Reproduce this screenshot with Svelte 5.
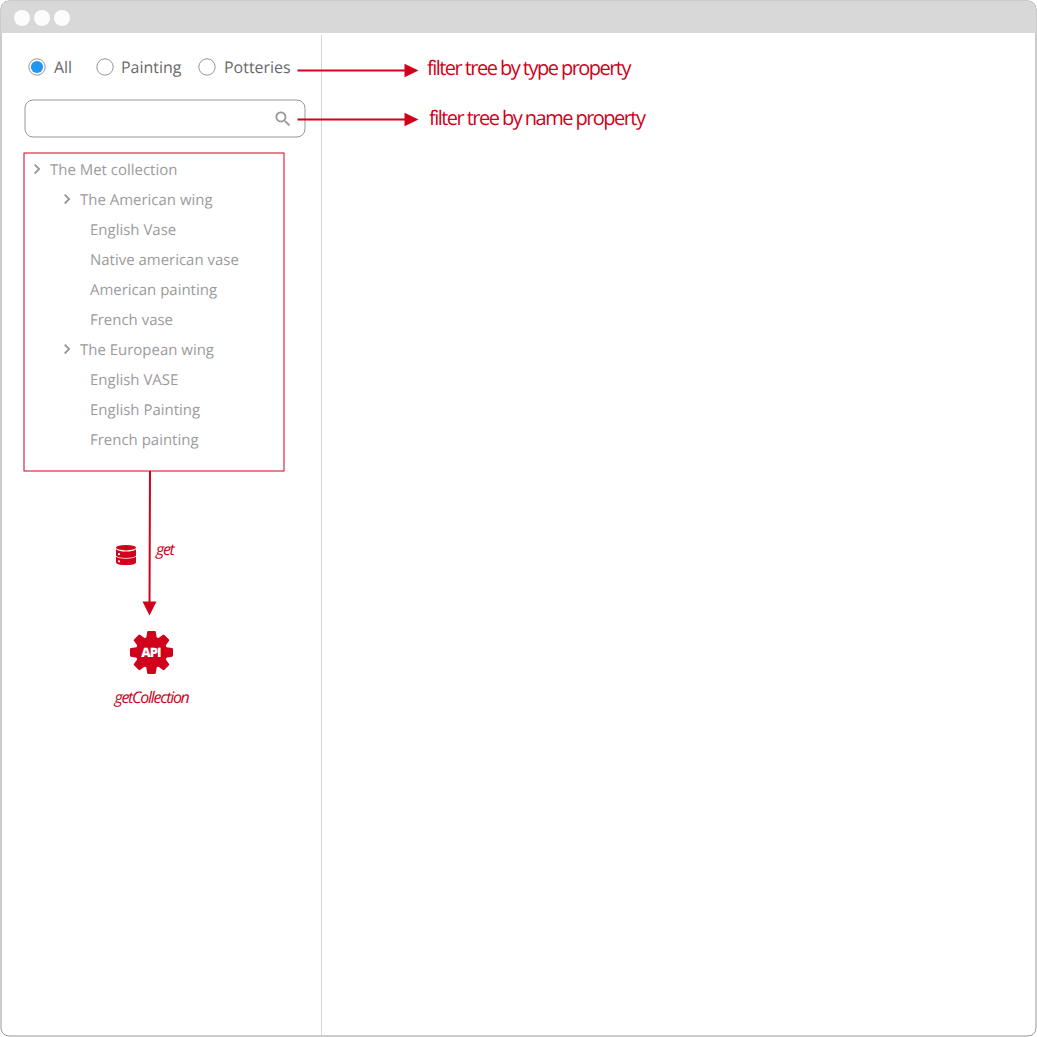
<script>
  const filters = ['All', 'Painting', 'Potteries'];
  const selected = 'All';
  const tree = [
    { label: 'The Met collection', level: 'root' },
    { label: 'The American wing', level: 'branch' },
    { label: 'English Vase', level: 'leaf' },
    { label: 'Native american vase', level: 'leaf' },
    { label: 'American painting', level: 'leaf' },
    { label: 'French vase', level: 'leaf' },
    { label: 'The European wing', level: 'branch' },
    { label: 'English VASE', level: 'leaf' },
    { label: 'English Painting', level: 'leaf' },
    { label: 'French painting', level: 'leaf' }
  ];
</script>

<div class="window">
  <svg class="outline" viewBox="0 0 1037 1037"><rect x="1" y="1" width="1035" height="1035" rx="8" /></svg>
  <header class="titlebar">
    <span class="light"></span><span class="light"></span><span class="light"></span>
  </header>
  <div class="body">
    <aside class="sidebar">
      <div class="filters">
        {#each filters as f}
          <div class="filter {f.toLowerCase()}">
            <svg class="radio" viewBox="0 0 18 18">
              <circle cx="9" cy="9" r="8.2" fill="none" stroke="#979797" />
              {#if f === selected}<circle cx="9" cy="9" r="6.1" fill="#2196f3" />{/if}
            </svg>
            <span>{f}</span>
          </div>
        {/each}
      </div>
      <div class="search">
        <svg class="outline" viewBox="0 0 282 39"><rect x="1" y="1" width="280" height="37" rx="8" /></svg>
        <svg viewBox="0 0 24 24" width="20" height="20"><path fill="#979797" stroke="#979797" stroke-width="0.150" d="M15.5 14h-.79l-.28-.27A6.471 6.471 0 0 0 16 9.5 6.5 6.5 0 1 0 9.5 16c1.61 0 3.09-.59 4.23-1.57l.27.28v.79l5 4.99L20.49 19l-4.99-5zm-6 0C7.01 14 5 11.99 5 9.5S7.01 5 9.5 5 14 7.01 14 9.5 11.99 14 9.5 14z" /></svg>
      </div>
      <div class="tree">
        <svg class="outline red" viewBox="0 0 262 320"><rect x="1" y="1" width="260" height="318" /></svg>
        {#each tree as node}
          <div class="node {node.level}">
            {#if node.level !== 'leaf'}
              <svg class="chevron" viewBox="0 0 8 12"><path d="M1.700 1.700 6.100 6.100 1.700 10.500" fill="none" stroke="#979797" stroke-width="1.800" /></svg>
            {/if}
            <span>{node.label}</span>
          </div>
        {/each}
      </div>
      <div class="request">
        <svg class="database" viewBox="0 0 20 20">
          <g fill="#d0021b">
            <ellipse cx="10" cy="2.700" rx="10" ry="2.700" />
            <path d="M0 4.300C1.500 6 5.500 6.600 10 6.600S18.500 6 20 4.300V10.700C18.500 12.200 14.500 12.900 10 12.900S1.500 12.200 0 10.700Z" />
            <path d="M0 11.600C1.500 13.100 5.500 13.800 10 13.800S18.500 13.100 20 11.600V17.400C20 19 15.500 20 10 20S0 19 0 17.400Z" />
          </g>
          <g fill="#fff"><circle cx="3" cy="9.200" r="1.100" /><circle cx="3" cy="16.300" r="1.100" /></g>
        </svg>
        <span class="caption get">get</span>
      </div>
      <div class="api">
        <svg viewBox="-22 -22 44 44" width="44" height="44">
          <g fill="#d0021b" transform="translate(-0.500 0.400)">
            <circle r="15.800" />
            {#each [0, 45, 90, 135, 180, 225, 270, 315] as angle}
              <path transform="rotate({angle})" d="M-5.500-13-4.300-20.600Q-4.100-21.500-3.200-21.500H3.200Q4.100-21.500 4.300-20.600L5.500-13Z" />
            {/each}
          </g>
          <text x="-1" y="4.700" text-anchor="middle">API</text>
        </svg>
        <span class="caption">getCollection</span>
      </div>
    </aside>
    <main class="notes">
      <p class="note type">filter tree by type property</p>
      <p class="note name">filter tree by name property</p>
    </main>
  </div>
  <svg class="arrows" viewBox="0 0 1037 1037">
    <g stroke="#d0021b" stroke-width="2">
      <path d="M297.500 70.500H407M297.500 119.500H407M150 471 149.500 604" />
    </g>
    <g fill="#d0021b">
      <path d="M418.500 70.500 404.500 63.700V77.300ZM418.500 119.500 404.500 112.700V126.300ZM149.500 615.500 142.500 601.500H156.500Z" />
    </g>
  </svg>
</div>

<style>
  :global(body) { margin: 0; background: #fff; }
  .window {
    position: relative;
    box-sizing: border-box;
    width: 1037px;
    height: 1037px;
    overflow: hidden;
    display: flex;
    flex-direction: column;
    font-family: "Open Sans", sans-serif;
    text-rendering: geometricPrecision;
  }
  .outline { position: absolute; inset: 0; width: 100%; height: 100%; fill: none; stroke: #979797; stroke-width: 1; pointer-events: none; }
  .outline.red { stroke: #d0021b; }
  .titlebar {
    position: relative;
    height: 32px;
    flex: none;
    box-sizing: border-box;
    margin: 1px 1px 0;
    padding: 1px 0 0 13px;
    display: flex;
    align-items: center;
    gap: 4px;
    background: #d8d8d8;
    border-radius: 8px 8px 0 0;
  }
  .light { width: 16px; height: 16px; border-radius: 50%; background: #fcfcfc; }
  .body { flex: 1; display: flex; padding: 2px; }
  .sidebar { width: 319px; border-right: 1px solid #d5d5d5; flex: none; }
  .filters { display: flex; height: 22px; margin: 21px 0 0 26px; }
  .filter { display: flex; align-items: center; gap: 8px; color: #686868; font-size: 15.960px; line-height: 22px; }
  .filter.all { width: 67.500px; }
  .filter.painting { width: 102.500px; gap: 7.500px; }
  .radio { width: 18px; height: 18px; }
  .search {
    position: relative;
    box-sizing: border-box;
    width: 282px;
    height: 39px;
    margin: 21px 0 0 22px;
    padding-right: 13.500px;
    display: flex;
    align-items: center;
    justify-content: flex-end;
  }
  .tree {
    position: relative;
    box-sizing: border-box;
    width: 262px;
    height: 320px;
    margin: 14px 0 0 21px;
    padding: 2px;
  }
  .node { display: flex; align-items: center; height: 30px; font-size: 14.970px; line-height: 22px; color: #9b9b9b; }
  .node span { padding-top: 2px; }
  .root { padding-left: 8px; }
  .branch { padding-left: 38px; }
  .leaf { padding-left: 65px; }
  .chevron { width: 8px; height: 12px; margin-right: 9px; }
  .caption { color: #d0021b; font-size: 16px; line-height: 22px; font-style: italic; letter-spacing: -1.280px; }
  .request { display: flex; align-items: flex-start; padding: 66px 0 0 114px; }
  .database { width: 20px; height: 20px; margin-top: 7px; }
  .get { margin-left: 20px; letter-spacing: -1.400px; }
  .api { width: 299px; display: flex; flex-direction: column; align-items: center; margin-top: 65px; gap: 12px; }
  .api text { font: 800 13px "Open Sans", sans-serif; letter-spacing: -0.900px; fill: #fff; }
  .notes { flex: 1; }
  .note { margin: 0; color: #d0021b; font-size: 20px; line-height: 28px; letter-spacing: -1.540px; white-space: nowrap; }
  .type { padding: 19px 0 0 105px; }
  .name { padding: 22px 0 0 107px; }
  .arrows { position: absolute; left: 0; top: 0; width: 1037px; height: 1037px; pointer-events: none; }
</style>
